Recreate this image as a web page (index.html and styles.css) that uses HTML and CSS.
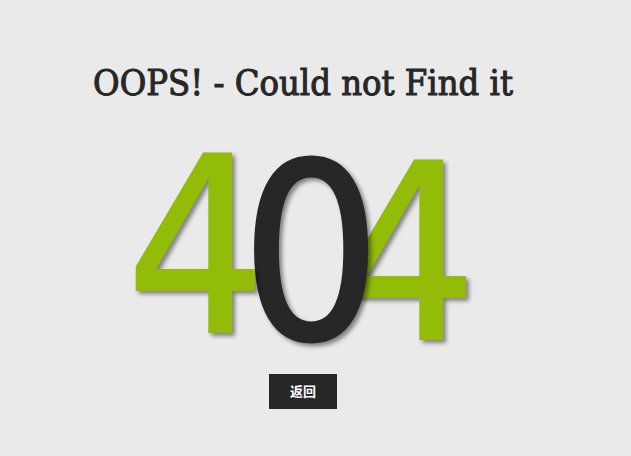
FILE: index.html
```
<!DOCTYPE html>
<html lang="en">
<head>
<meta charset="utf-8">
<meta name="viewport" content="width=device-width, initial-scale=1">
<title>404</title>
<link rel="stylesheet" href="styles.css">
</head>
<body>
<main class="error">
  <h1 class="title">OOPS! - Could not Find it</h1>
  <svg class="code" viewBox="0 0 344 204" role="img" aria-label="404">
    <text class="digit accent" x="206" y="195">4</text>
    <text class="digit" x="110" y="195">0</text>
    <text class="digit accent" x="-5" y="188">4</text>
  </svg>
  <a class="back" href="/" lang="zh">返回</a>
</main>
</body>
</html>
```

FILE: styles.css
```
body {
  margin: 0;
  background: #eaeaea;
  color: #272727;
}

.error {
  display: flex;
  flex-direction: column;
  align-items: center;
  padding: 55px 25px 48px 0;
}

.title {
  margin: 0 0 33px;
  font: 400 36px/56px "DejaVu Serif Condensed", "DejaVu Serif", serif;
  -webkit-text-stroke: 1px #272727;
  white-space: nowrap;
}

.code {
  width: 344px;
  max-width: 100%;
  margin-bottom: 26px;
  overflow: visible;
}

.digit {
  font: 400 245px "DejaVu Sans Condensed", "DejaVu Sans", sans-serif;
  fill: #272727;
  stroke: #272727;
  stroke-width: 3px;
  filter: drop-shadow(3px 3px 2px rgba(0, 0, 0, 0.45));
}

.accent {
  fill: #92bc08;
  stroke: #92bc08;
  stroke-width: 2px;
}

.back {
  padding: 0 21px;
  background: #272727;
  color: #fff;
  font: 700 13px/35px "Liberation Sans", "Noto Sans CJK SC", sans-serif;
  text-decoration: none;
}
```
